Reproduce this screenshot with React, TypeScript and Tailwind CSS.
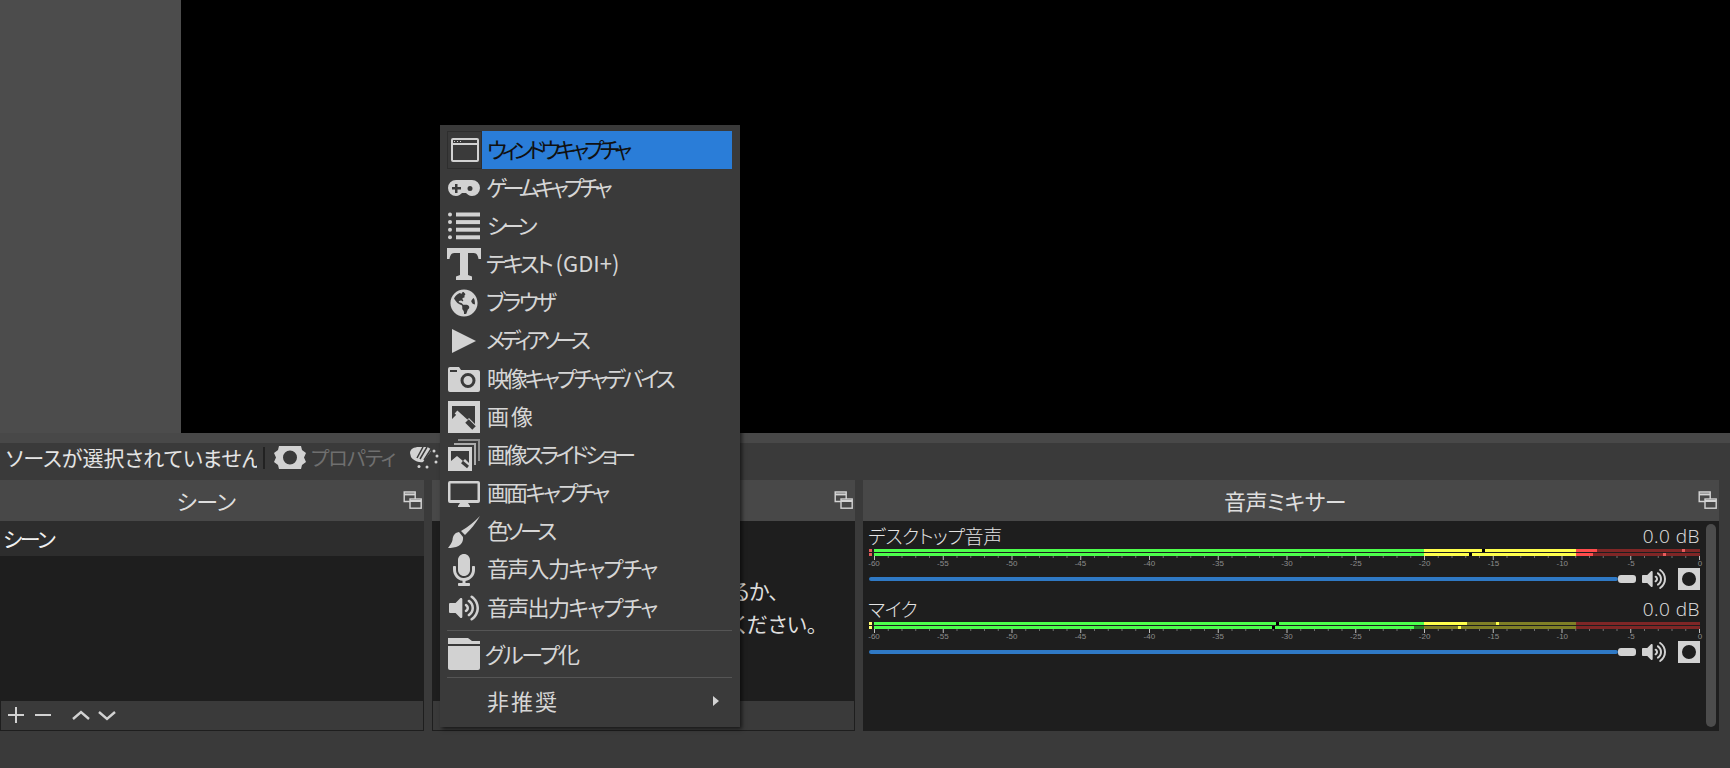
import type { ReactNode } from 'react';
import { FaGlobeAmericas, FaMicrophone, FaVolumeUp } from 'react-icons/fa';

const GREEN = '#4cff4c';
const YELLOW = '#ffff4c';
const RED = '#ff4c4c';
const DARK_GREEN = '#267f26';
const DARK_YELLOW = '#7f7f26';
const DARK_RED = '#7f2626';

type Bar = { stops: [number, string][]; peaks: [number, string][] };

const channels: { name: string; clip: string; bars: Bar[] }[] = [
  {
    name: 'デスクトップ音声',
    clip: '#e35b5b',
    bars: [
      { stops: [[550, GREEN], [702, YELLOW], [723, RED], [826, DARK_RED]], peaks: [[608, '#000'], [808, '#e85c5c']] },
      { stops: [[550, GREEN], [702, YELLOW], [719, RED], [826, DARK_RED]], peaks: [[595, '#000'], [789, '#e85c5c']] },
    ],
  },
  {
    name: 'マイク',
    clip: '#ffff70',
    bars: [
      { stops: [[550, GREEN], [593, YELLOW], [702, DARK_YELLOW], [826, DARK_RED]], peaks: [[402, '#000'], [622, YELLOW]] },
      { stops: [[540, GREEN], [550, DARK_GREEN], [702, DARK_YELLOW], [826, DARK_RED]], peaks: [[398, '#000'], [584, YELLOW]] },
    ],
  },
];

function PopoutIcon() {
  return (
    <svg width="19" height="18" viewBox="0 0 19 18" fill="none" stroke="#d4d4d4" strokeWidth="1.4">
      <path d="M12 10.5H1.2V1h11v7" />
      <path d="M1 3.4h11" strokeWidth="2" />
      <rect x="7" y="8" width="11.2" height="9.2" fill="#484848" />
      <path d="M7 10h11" strokeWidth="2" />
    </svg>
  );
}

function WindowIcon() {
  return (
    <svg width="28" height="24" viewBox="0 0 28 24" fill="none" stroke="#d2d2d2">
      <rect x="1" y="1" width="26" height="22" strokeWidth="2" rx="1" />
      <path d="M1 6h26" strokeWidth="2" />
      <path d="M3 3.5h1M6 3.5h1M9 3.5h1" stroke="#d2d2d2" />
    </svg>
  );
}

function GamepadIcon() {
  return (
    <svg width="32" height="16" viewBox="0 0 32 16" fill="#d2d2d2">
      <path
        fillRule="evenodd"
        d="M8 0h16a8 8 0 0 1 0 16c-3 0-4.500-2-6-3h-4c-1.500 1-3 3-6 3A8 8 0 0 1 8 0zM7 4v3H4v2.500h3V13h2.500V9.500H13V7H9.500V4zM22 6a2.500 2.500 0 1 0 0 5 2.500 2.500 0 0 0 0-5z"
      />
    </svg>
  );
}

function ListIcon() {
  return (
    <svg width="32" height="28" viewBox="0 0 32 28" fill="#d2d2d2">
      {[0, 1, 2, 3].map((i) => (
        <g key={i}>
          <circle cx="2" cy={2.5 + i * 7.6} r="2" />
          <rect x="8" y={0.5 + i * 7.6} width="24" height="4" />
        </g>
      ))}
    </svg>
  );
}

function SerifTIcon() {
  return (
    <svg width="34" height="32" viewBox="0 0 34 32" fill="#d2d2d2">
      <path d="M0 0h34v11h-2.500c-.500-3-1.500-6-5-6H21v22l4 1.500V32H9v-3.500l4-1.500V5H7.500c-3.500 0-4.500 3-5 6H0z" />
    </svg>
  );
}

function PlayIcon() {
  return (
    <svg width="24" height="24" viewBox="0 0 24 24" fill="#d2d2d2">
      <path d="M0 0l24 12L0 24z" />
    </svg>
  );
}

function CameraIcon() {
  return (
    <svg width="32" height="25" viewBox="0 0 32 25" fill="#d2d2d2">
      <path
        fillRule="evenodd"
        d="M2 0h9l2 3h17a2 2 0 0 1 2 2v18a2 2 0 0 1-2 2H2a2 2 0 0 1-2-2V2a2 2 0 0 1 2-2zM2 3v2h7V3zm18 3a7.500 7.500 0 1 0 0 15 7.500 7.500 0 0 0 0-15zm0 3a4.500 4.500 0 1 1 0 9 4.500 4.500 0 0 1 0-9z"
      />
    </svg>
  );
}

function ImageIcon() {
  return (
    <svg width="32" height="32" viewBox="0 0 32 32">
      <rect width="32" height="32" fill="#d2d2d2" />
      <path d="M4 5h23v18l-6-6-3 3-8-8-6 6z" fill="#3a3a3a" />
      <path d="M8 11l21 19" stroke="#d2d2d2" strokeWidth="4" />
      <path d="M19 20l7 7" stroke="#3a3a3a" strokeWidth="5" />
    </svg>
  );
}

function SlidesIcon() {
  return (
    <svg width="32" height="32" viewBox="0 0 32 32" fill="#d2d2d2">
      <path d="M10 0h22v22h-2V2H10z" opacity="0.55" />
      <path d="M6 4h22v22h-2V6H6z" opacity="0.75" />
      <rect y="8" width="24" height="24" />
      <path d="M3 12h18v12l-4-4-2 2-6-5-6 5z" fill="#3a3a3a" />
      <path d="M14 23l6 5" stroke="#3a3a3a" strokeWidth="3" />
    </svg>
  );
}

function MonitorIcon() {
  return (
    <svg width="32" height="26" viewBox="0 0 32 26" fill="#d2d2d2">
      <path
        fillRule="evenodd"
        d="M2 0h28a2 2 0 0 1 2 2v18a2 2 0 0 1-2 2H20l2 3v1H10v-1l2-3H2a2 2 0 0 1-2-2V2a2 2 0 0 1 2-2zM2.500 2.500v16.500h27V2.500z"
      />
    </svg>
  );
}

function BrushIcon() {
  return (
    <svg width="32" height="32" viewBox="0 0 32 32" fill="#d2d2d2">
      <path d="M32 0C27 5 20 11 13 15l4 4C23 13 28 7 32 0z" />
      <path d="M11 16C6 17 5 20 4.500 24 4 27 2 29 0 32c7 0 16-2 15-11z" />
    </svg>
  );
}

function FolderIcon() {
  return (
    <svg width="32" height="32" viewBox="0 0 32 32" fill="#d2d2d2">
      <path d="M0 0h20l4 3h8v3H0z" />
      <path d="M0 8h32v22a2 2 0 0 1-2 2H2a2 2 0 0 1-2-2z" />
    </svg>
  );
}

function MixerGearIcon() {
  return (
    <svg width="22" height="22" viewBox="0 0 22 22" fill="#d2d2d2">
      <path fillRule="evenodd" d="M0 0h22v22H0zM11 4a7 7 0 1 0 0 14 7 7 0 0 0 0-14z" />
    </svg>
  );
}

function PropertiesIcon() {
  return (
    <svg width="32" height="23" viewBox="0 0 32 23" fill="#d2d2d2">
      <path
        fillRule="evenodd"
        d="M5 0h22l1 4 4 3-2 4.500 2 4.500-4 3-1 4H5l-1-4-4-3 2-4.500L0 7l4-3zM16 4.500a7 7 0 1 0 0 14 7 7 0 0 0 0-14z"
      />
    </svg>
  );
}

function FiltersIcon() {
  return (
    <svg width="30" height="22" viewBox="0 0 30 22" fill="#d2d2d2">
      <path d="M0 6C0 2 4 0 9 0h6c4 0 6 2 6 4l-8 11C8 16 3 13 1 10z" />
      <path d="M13 0L7 11M17 0l-7 12M21 2l-7 11" stroke="#3a3a3a" strokeWidth="1.500" />
      <circle cx="9" cy="19.500" r="1.500" />
      <circle cx="17" cy="20" r="1.500" />
      <circle cx="26" cy="15" r="1.500" />
      <circle cx="27" cy="9" r="1.500" />
      <circle cx="24" cy="4" r="1.500" />
    </svg>
  );
}

const menuItems: { id: string; label: ReactNode; icon: ReactNode; text: string }[] = [
  { id: 'game', label: 'ゲームキャプチャ', icon: <GamepadIcon />, text: 'ml-[5px] tracking-[-4.7px]' },
  { id: 'scene', label: 'シーン', icon: <ListIcon />, text: 'ml-[6px] tracking-[-5px]' },
  {
    id: 'text',
    label: (
      <>
        <span className="tracking-[-3px]">テキスト</span>
        <span> (GDI+)</span>
      </>
    ),
    icon: <SerifTIcon />,
    text: 'ml-[5px]',
  },
  { id: 'browser', label: 'ブラウザ', icon: <FaGlobeAmericas size={28} color="#d2d2d2" />, text: 'ml-[5px] tracking-[-2.8px]' },
  { id: 'media', label: 'メディアソース', icon: <PlayIcon />, text: 'ml-[5px] tracking-[-4.900px]' },
  { id: 'video', label: '映像キャプチャデバイス', icon: <CameraIcon />, text: 'ml-[6px] tracking-[-3.2px]' },
  { id: 'image', label: '画像', icon: <ImageIcon />, text: 'ml-[6px] tracking-[2px]' },
  { id: 'slides', label: '画像スライドショー', icon: <SlidesIcon />, text: 'ml-[6px] tracking-[-3.6px]' },
  { id: 'display', label: '画面キャプチャ', icon: <MonitorIcon />, text: 'ml-[6px] tracking-[-2.9px]' },
  { id: 'color', label: '色ソース', icon: <BrushIcon />, text: 'ml-[6px] tracking-[-3.500px]' },
  { id: 'mic', label: '音声入力キャプチャ', icon: <FaMicrophone size={32} color="#d2d2d2" />, text: 'ml-[6px] tracking-[-1.700px]' },
  { id: 'audio', label: '音声出力キャプチャ', icon: <FaVolumeUp size={30} color="#d2d2d2" />, text: 'ml-[6px] tracking-[-1.700px]' },
];

function Panel({ title, className, children }: { title: string; className: string; children: ReactNode }) {
  return (
    <section className={`flex h-[251px] flex-col ${className}`}>
      <header className="relative flex h-[41px] shrink-0 items-center justify-center bg-[#484848] pr-[12px] text-[22px] tracking-[-0.5px] text-[#dedede]">
        {title}
        <span className="absolute right-[2px] top-[11px]">
          <PopoutIcon />
        </span>
      </header>
      {children}
    </section>
  );
}

function MeterBar({ stops, peaks }: Bar) {
  let prev = 0;
  return (
    <div className="relative flex h-[3px] w-[826px]">
      {stops.map(([end, color]) => {
        const width = end - prev;
        prev = end;
        return <div key={end} style={{ width, background: color }} />;
      })}
      {peaks.map(([x, color]) => (
        <div key={x} className="absolute top-0 h-[3px] w-[3px]" style={{ left: x, background: color }} />
      ))}
    </div>
  );
}

function Channel({ name, clip, bars }: { name: string; clip: string; bars: Bar[] }) {
  return (
    <div className="pl-[6px]">
      <div className="-ml-[1px] flex h-[25px] w-[832px] items-center justify-between text-[19px] font-light text-[#e4e4e4]">
        <span className="tracking-[-0.4px]">{name}</span>
        <span className="font-['Open_Sans'] tracking-[0.5px]">0.0 dB</span>
      </div>
      <div className="flex">
        <div className="mr-[2px] flex w-[3px] flex-col gap-px">
          <div className="h-[3px]" style={{ background: clip }} />
          <div className="h-[3px]" style={{ background: clip }} />
        </div>
        <div className="flex flex-col gap-px">
          <MeterBar {...bars[0]} />
          <MeterBar {...bars[1]} />
        </div>
      </div>
      <div className="ml-[5px]">
        <svg width="827" height="4" className="block">
          {Array.from({ length: 61 }, (_, i) => {
            const x = 0.5 + i * 13.75;
            return i % 5 === 0 ? (
              <line key={i} x1={x} x2={x} y1="0" y2="4" stroke="#c0c0c0" />
            ) : (
              <line key={i} x1={x} x2={x} y1="0" y2="2" stroke="#707070" />
            );
          })}
        </svg>
        <div className="flex h-[8px] w-[826px] items-center justify-between font-['Liberation_Sans'] text-[8px] text-[#8c8c8c]">
          {[-60, -55, -50, -45, -40, -35, -30, -25, -20, -15, -10, -5, 0].map((db) => (
            <span key={db} className="flex w-0 justify-center">
              {db}
            </span>
          ))}
        </div>
      </div>
      <div className="flex h-[22px] items-center">
        <div className="h-[4px] w-[749px] rounded-full bg-[#2f79c5]" />
        <div className="h-[8px] w-[18px] rounded-[3px] bg-[#d2d2d2]" />
        <span className="ml-[6px] flex w-[28px]">
          <FaVolumeUp size={24} color="#d2d2d2" />
        </span>
        <span className="ml-[8px] flex">
          <MixerGearIcon />
        </span>
      </div>
    </div>
  );
}

function ContextMenu() {
  return (
    <div className="absolute left-[440px] top-[125px] w-[300px] bg-[#3a3a3a] pb-[6px] pl-[7px] pr-[8px] pt-[6px] text-[22px] text-[#d6d6d6] shadow-[2px_2px_4px_rgba(0,0,0,0.6)]">
      <div className="flex h-[38px] items-stretch">
        <span className="flex w-[35px] items-center justify-center border border-[#2e2e2e]">
          <WindowIcon />
        </span>
        <span className="flex flex-1 items-center bg-[#2a7dd8] pb-[4px] pl-[5px] tracking-[-5px] text-[#101010]">ウィンドウキャプチャ</span>
      </div>
      {menuItems.map((item) => (
        <div key={item.id} className="flex h-[38.2px] items-center">
          <span className="flex w-[34px] shrink-0 items-center justify-center">{item.icon}</span>
          <span className={`whitespace-nowrap pb-[4px] ${item.text}`}>{item.label}</span>
        </div>
      ))}
      <div className="mt-[3px] h-px bg-[#555]" />
      <div className="flex h-[46px] items-center">
        <span className="flex w-[34px] shrink-0 items-center justify-center">
          <FolderIcon />
        </span>
        <span className="ml-[4px] pb-[2px] tracking-[-2px]">グループ化</span>
      </div>
      <div className="h-px bg-[#555]" />
      <div className="flex h-[43px] items-center pl-[40px] pt-[2px]">
        <span className="tracking-[2px]">非推奨</span>
        <span className="ml-auto mr-[13px] h-0 w-0 border-y-[5px] border-l-[6px] border-y-transparent border-l-[#d2d2d2]" />
      </div>
    </div>
  );
}

export default function App() {
  return (
    <div className="relative flex h-[768px] w-[1730px] flex-col overflow-hidden bg-[#3a3a3a] font-['Noto_Sans_CJK_JP',sans-serif] [font-feature-settings:'palt']">
      <div className="flex h-[433px]">
        <div className="w-[181px] bg-[#4c4c4c]" />
        <div className="flex-1 bg-black" />
      </div>
      <div className="h-[10px] bg-[#484848]" />
      <div className="flex h-[37px] items-center pb-[8px]">
        <div className="w-[257px] shrink-0 overflow-hidden whitespace-nowrap pl-[6px] text-[21px] text-[#e4e4e4]">ソースが選択されていません</div>
        <div className="ml-[6px] h-[22px] w-[2px] bg-[#222]" />
        <span className="ml-[9px] flex">
          <PropertiesIcon />
        </span>
        <span className="ml-[5px] text-[20px] tracking-[-1px] text-[#6f6f6f]">プロパティ</span>
        <span className="ml-[15px] flex">
          <FiltersIcon />
        </span>
      </div>
      <div className="flex gap-[8px] pr-[11px]">
        <Panel title="シーン" className="w-[424px]">
          <div className="flex-1 bg-[#1e1e1e]">
            <div className="flex h-[35px] items-center bg-[#2d2d2d] pl-[3px] text-[21px] tracking-[-2.5px] text-[#f0f0f0]">シーン</div>
          </div>
          <div className="flex h-[30px] items-center border-x border-b border-[#1e1e1e] pb-[1px] pl-[7px]">
            <svg width="110" height="16" viewBox="0 0 110 16" fill="none" stroke="#d2d2d2" strokeWidth="2">
              <path d="M8 0v16M0 8h16M27 8h16" />
              <path d="M65 12l8-7 8 7M91 5l8 7 8-7" strokeWidth="2.400" />
            </svg>
          </div>
        </Panel>
        <Panel title="ソース" className="w-[423px]">
          <div className="flex flex-1 flex-col items-center justify-center bg-[#1e1e1e] pb-[8px] text-[21px] leading-[33px] text-[#dedede]">
            <div className="tracking-[-0.5px]">下の + ボタンをクリックするか、</div>
            <div>ここで右クリックして追加してください。</div>
          </div>
          <div className="h-[30px] border-x border-b border-[#1e1e1e]" />
        </Panel>
        <Panel title="音声ミキサー" className="flex-1">
          <div className="flex flex-1 bg-[#1e1e1e] pt-[3px]">
            <div className="flex flex-1 flex-col gap-[7px]">
              {channels.map((ch) => (
                <Channel key={ch.name} {...ch} />
              ))}
            </div>
            <div className="mr-[3px] h-[203px] w-[10px] rounded-full bg-[#4c4c4c]" />
          </div>
        </Panel>
      </div>
      <ContextMenu />
    </div>
  );
}
